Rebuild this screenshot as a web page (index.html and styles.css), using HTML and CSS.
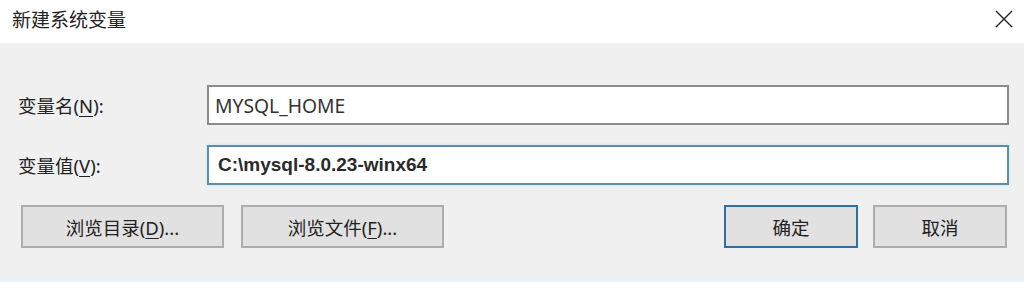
FILE: index.html
```html
<!DOCTYPE html>
<html lang="zh-CN">
<head>
    <meta charset="UTF-8">
    <title>新建系统变量</title>
    <link rel="stylesheet" href="styles.css">
</head>
<body>
    <div class="dialog">
        <div class="titlebar">
            <span class="title">新建系统变量</span>
            <span class="close">
                <svg width="18" height="18" viewBox="0 0 18 18">
                    <path d="M1 1 L17 17 M17 1 L1 17" stroke="#222" stroke-width="1.4" fill="none"/>
                </svg>
            </span>
        </div>
        <div class="content">
            <div class="field">
                <label class="label">变量名(<u>N</u>):</label>
                <div class="input">MYSQL_HOME</div>
            </div>
            <div class="field">
                <label class="label">变量值(<u>V</u>):</label>
                <div class="input focused">C:\mysql-8.0.23-winx64</div>
            </div>
            <div class="buttons">
                <div class="group">
                    <button class="button wide">浏览目录(<u>D</u>)...</button>
                    <button class="button wide">浏览文件(<u>F</u>)...</button>
                </div>
                <div class="group right">
                    <button class="button default">确定</button>
                    <button class="button">取消</button>
                </div>
            </div>
        </div>
    </div>
</body>
</html>
```

FILE: styles.css
```css
body {
    margin: 0;
    font-family: "Noto Sans", "Noto Sans CJK SC", sans-serif;
    color: #1e1e1e;
    background: #f0f0f0;
}
.dialog {
    width: 1024px;
    height: 282px;
    display: flex;
    flex-direction: column;
}
.titlebar {
    height: 43px;
    background: #ffffff;
    display: flex;
    align-items: center;
    justify-content: space-between;
    padding: 0 10px 0 12px;
    flex-shrink: 0;
}
.title {
    font-size: 19px;
    color: #222;
    margin-top: -6px;
}
.close {
    display: flex;
    margin-top: -6px;
    margin-right: 1px;
}
.content {
    flex: 1;
    background: #f0f0f0;
    padding: 42px 15px 0 18px;
    border-bottom: 2px solid #eaf3f9;
}
.field {
    display: grid;
    grid-template-columns: 189px 1fr;
    align-items: center;
    margin-bottom: 20px;
}
.label {
    font-size: 18.5px;
    color: #222;
}
.label u {
    text-underline-offset: 3px;
}
.input {
    height: 40px;
    box-sizing: border-box;
    background: #fff;
    border: 2px solid #8c8c8c;
    padding: 0 6px;
    display: flex;
    align-items: center;
    font-size: 19.3px;
    color: #333;
}
.input.focused {
    border-color: #5e8ea8;
    box-shadow: 0 0 2px 1px #d6ecf7;
    font-weight: bold;
    font-size: 19px;
    font-family: "Liberation Sans", "Noto Sans CJK SC", sans-serif;
    padding-left: 9px;
    color: #2a2a2a;
}
.buttons {
    display: flex;
    justify-content: space-between;
    margin-top: 7px;
    margin-right: 2px;
    padding-left: 3px;
}
.group {
    display: flex;
    gap: 17px;
}
.group.right {
    gap: 15px;
}
.button {
    height: 43px;
    width: 134px;
    background: #e1e1e1;
    border: 2px solid #adadad;
    font-family: "Noto Sans", "Noto Sans CJK SC", sans-serif;
    font-size: 18.5px;
    color: #222;
    padding: 0;
}
.button.wide {
    width: 203px;
}
.button.default {
    border-color: #2f6fa6;
}
.button u {
    text-underline-offset: 3px;
}
```
